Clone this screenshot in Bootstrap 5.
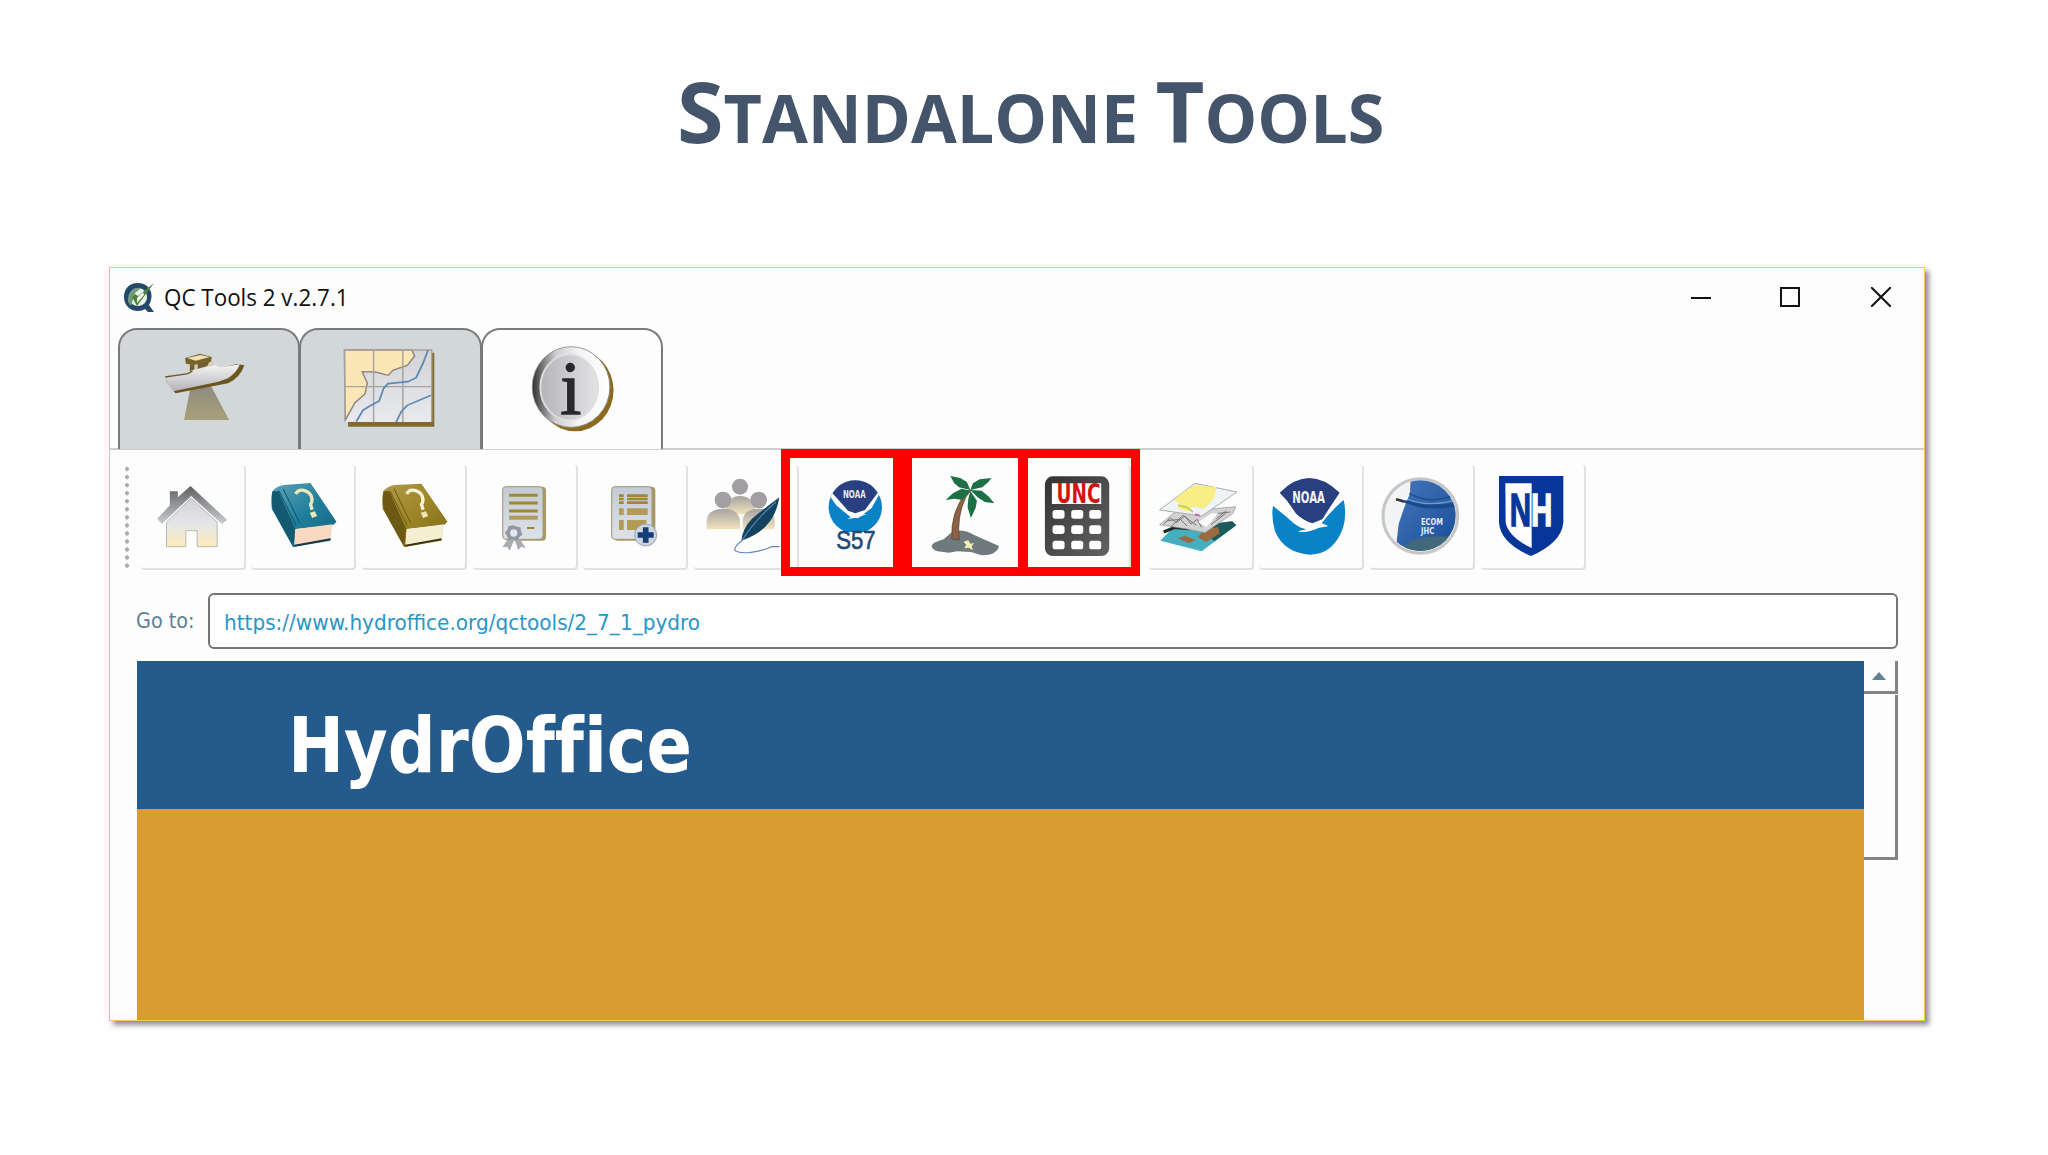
<!DOCTYPE html>
<html lang="en">
<head>
    <meta charset="UTF-8">
    <meta name="viewport" content="width=device-width, initial-scale=1.0">
    <title>Standalone Tools</title>
    <link href="https://cdn.jsdelivr.net/npm/bootstrap@5.3.3/dist/css/bootstrap.min.css" rel="stylesheet">
    <style>
        body {
            background: #fefefe;
            font-family: "Open Sans", "Noto Sans", sans-serif;
            height: 1155px;
            overflow: hidden;
        }
        .slide-title {
            height: 267px;
            padding: 60px 0 0 677px;
            color: #44546a;
            font-weight: 700;
            font-size: 66px;
            line-height: 115px;
            white-space: nowrap;
        }
        .slide-title .cap { font-size: 84px; line-height: 1; }
        .fit { display: inline-block; transform-origin: 0 50%; white-space: nowrap; }
        .fit-title { transform: scaleX(1.006); }
        .fit-caption { transform: scaleX(.933); }
        .fit-label { transform: scaleX(.97); }
        .fit-url { transform: scaleX(1.013); }
        .fit-brand { transform: scaleX(.967); }
        .app-window {
            width: 1816px;
            height: 754px;
            margin-left: 109px;
            background: #fefdfe;
            border: 1.5px solid #f4c64f;
            box-shadow: 4px 4px 5px rgba(80, 85, 90, .65);
        }
        .titlebar { height: 60px; padding: 0 33px 2px 13px; }
        .caption { font-size: 24px; color: #111; margin-left: 9px; line-height: 1; }
        .win-controls { gap: 69px; }
        .win-close { margin-left: 2px; }
        .tab-strip { height: 122px; padding-left: 7.5px; border-bottom: 2px solid #cfcfd1; }
        .app-tab {
            width: 182.5px;
            height: 121px;
            border: 2px solid #777b7e;
            border-bottom: 0;
            border-radius: 19px 19px 0 0;
            background: #d2d7da;
        }
        .app-tab + .app-tab { margin-left: -1px; }
        .app-tab.current { background: #fefdfe; }
        .app-tab svg { width: 100%; height: 100%; display: block; }
        .toolbar { height: 143px; padding: 15px 0 0 15px; }
        .grip {
            width: 4px;
            height: 104px;
            margin-right: 11.5px;
            background: radial-gradient(circle at 50% 50%, #b0abad 1.8px, transparent 2.3px) 0 0 / 4px 8.05px;
        }
        .tools { gap: 5.7px; }
        .tool {
            width: 105px;
            height: 105px;
            border-right: 2px solid #e2e0e1;
            border-bottom: 2px solid #e2e0e1;
            border-radius: 4px;
        }
        .tool svg { width: 104px; height: 104px; display: block; }
        .tool.group-start { margin-left: 12px; }
        .mark-box { position: absolute; top: -1px; height: 127px; border: 9px solid #f00; }
        .mark-1 { left: 671px; width: 121px; }
        .mark-2 { left: 792px; width: 126px; border-left-width: 10px; }
        .mark-3 { left: 908px; width: 122px; }
        .address { height: 56px; padding: 0 26px; font-family: "DejaVu Sans Condensed", "DejaVu Sans", sans-serif; font-size: 22px; }
        .address label { width: 72px; color: #5f7f96; line-height: 1; white-space: nowrap; }
        .url-box {
            height: 56px;
            border: 2px solid #777377;
            border-radius: 6px;
            padding: 2px 0 0 14px;
            color: #2a96c6;
            background: #fefefe;
        }
        .viewer { margin: 12px 26px 0 26.5px; }
        .banner { height: 147.5px; background: #255a8c; padding: 21px 0 0 151px; }
        .brand-name { font-family: "DejaVu Sans", sans-serif; font-stretch: condensed; font-weight: 700; font-size: 77px; color: #fff; line-height: 1; font-variant-ligatures: none; }
        .page-body { background: #d89c32; }
        .scroll { width: 34px; }
        .scroll-up { height: 33px; border-right: 3px solid #858286; border-bottom: 3px solid #858286; }
        .scroll-up svg { margin-right: 2px; }
        .scroll-thumb { height: 165px; margin-top: 1px; border-right: 3px solid #858286; border-bottom: 3px solid #858286; }
    </style>
</head>
<body>
    <h1 class="slide-title m-0"><span class="fit fit-title"><span class="cap">S</span>TANDALONE <span class="cap">T</span>OOLS</span></h1>

    <div class="app-window d-flex flex-column overflow-visible">
        <div class="titlebar d-flex align-items-center flex-shrink-0">
            <svg width="32" height="31" viewBox="0 0 32 31">
                <path d="M15 1C6 1 1 7 1 15s6 14 14 14c3 0 5-1 7-2l3 3h6l-5-7c4-7 3-14-1-18-3-3-6-4-10-4z" fill="#24486a"/>
                <path d="M15 6c5 0 9 4 9 9s-4 9-9 9-9-4-9-9 4-9 9-9z" fill="#e9f1ea"/>
                <path d="M5 20C4 10 11 5 18 6l-6 5-4 13z" fill="#6f9a80"/>
                <path d="M9 15l5 9L31 1 15 14l-3-2z" fill="#4d8038"/>
                <path d="M14 16l6-6 1 3-7 8z" fill="#f4faf2"/>
            </svg>
            <span class="caption fit fit-caption">QC Tools 2 v.2.7.1</span>
            <div class="win-controls d-flex align-items-center ms-auto">
                <svg width="20" height="20" viewBox="0 0 20 20"><path d="M0 11h20" stroke="#111" stroke-width="2"/></svg>
                <svg width="20" height="20" viewBox="0 0 20 20"><path d="M1 1h18v18H1z" fill="none" stroke="#111" stroke-width="2"/></svg>
                <svg class="win-close" width="20" height="20" viewBox="0 0 20 20"><path d="M0 0l20 20M20 0L0 20" stroke="#111" stroke-width="2"/></svg>
            </div>
        </div>

        <div class="tab-strip d-flex flex-shrink-0">
            <div class="app-tab">
                <svg viewBox="54 210 482.5 357" preserveAspectRatio="none">
                    <defs>
                        <linearGradient id="beam" x2="0" y2="1"><stop stop-color="#8d8a80"/><stop offset="1" stop-color="#a9a07a"/></linearGradient>
                        <linearGradient id="hull" x2="0" y2="1"><stop stop-color="#f5f5f6"/><stop offset="1" stop-color="#b4b4b8"/></linearGradient>
                    </defs>
                    <path d="M245 380l52-8 52 108H227z" fill="url(#beam)"/>
                    <path d="M178 362l26 38 142-30q34-18 44-54l-20-4z" fill="#6b551c"/>
                    <path d="M238 308l64-6 10 22-72 18z" fill="#d6ceb6"/>
                    <path d="M243 314l12-4v18l-12 6zM264 310l32-6-6 14-26 8z" fill="#6f5d33"/>
                    <path d="M230 294l40-13 32 10-2 14-48 10-20-4z" fill="#79632b"/>
                    <path d="M235 294l36-9 26 6-38 11z" fill="#efe0b8"/>
                    <path d="M174 350l64-10 10-8 62-16 16 6 52-9q-8 24-32 42l-26 10-122 29q-16-20-24-44z" fill="url(#hull)"/>
                    <path d="M176 351l62-10 12-8" fill="none" stroke="#6a5a34" stroke-width="4"/>
                </svg>
            </div>
            <div class="app-tab">
                <svg viewBox="544.7 210 482.5 357" preserveAspectRatio="none">
                    <defs><linearGradient id="sea" x2="0" y2="1"><stop stop-color="#d3d3d5"/><stop offset="1" stop-color="#e8eaee"/></linearGradient></defs>
                    <path d="M672 278h233v222H672z" fill="#83682b"/>
                    <path d="M662 270h236v216H662z" fill="url(#sea)"/>
                    <path d="M662 270h182l8 18-20 28-38 14-14 16-34-10-36-1 14 34-6 32-28 28-26 52z" fill="#fbe7b6" stroke="#8f8580" stroke-width="4"/>
                    <path d="M741 270v216M820 270v216M662 380h236M662 270h236v216" fill="none" stroke="#aba3a0" stroke-width="4"/>
                    <path d="M888 271l-14 40-18 42-22 12-54 6-12 14-12 38-30 18-14 10-18 34M896 406l-64 30-16 18-14 32" fill="none" stroke="#6189b4" stroke-width="5"/>
                    <path d="M663 270v216" stroke="#aaa" stroke-width="3"/>
                </svg>
            </div>
            <div class="app-tab current">
                <svg viewBox="1035 210 482.5 357" preserveAspectRatio="none">
                    <defs>
                        <linearGradient id="rim"><stop stop-color="#2f2f30"/><stop offset=".3" stop-color="#cfcfd1"/><stop offset=".6" stop-color="#f4f4f5"/><stop offset="1" stop-color="#fff"/></linearGradient>
                        <linearGradient id="face"><stop stop-color="#b5b4b6"/><stop offset="1" stop-color="#e3e2e4"/></linearGradient>
                    </defs>
                    <ellipse cx="1284" cy="391" rx="104" ry="123" fill="#8b6a1d"/>
                    <ellipse cx="1273" cy="381" rx="105" ry="121" fill="url(#rim)" stroke="#8a898b" stroke-width="2.5"/>
                    <ellipse cx="1268" cy="382" rx="78" ry="98" fill="url(#face)" stroke="#dedddf" stroke-width="5"/>
                    <g transform="translate(1272 462) scale(.9 1)"><text text-anchor="middle" font-family="Liberation Serif, serif" font-size="228" fill="#29292b" stroke="#29292b" stroke-width="4">i</text></g>
                </svg>
            </div>
        </div>

        <div class="toolbar position-relative d-flex flex-shrink-0">
            <div class="grip"></div>
            <div class="tools d-flex">
                <div class="tool">
                    <svg viewBox="61.5 45 312 312">
                        <defs>
                            <linearGradient id="roof" x2="0" y2="1"><stop stop-color="#5f5f61"/><stop offset="1" stop-color="#c9ced2"/></linearGradient>
                            <linearGradient id="wall" x2="0" y2="1"><stop stop-color="#d2d2d6"/><stop offset=".55" stop-color="#e6e6e8"/><stop offset="1" stop-color="#fcedb8"/></linearGradient>
                        </defs>
                        <path d="M138 216l74-72 78 72v74h-60v-48h-34v48h-58z" fill="url(#wall)" stroke="#b9b8b8" stroke-width="3"/>
                        <path d="M110 206l38-40v-42h24v18l38-34 110 102-16 12-92-84-88 84z" fill="url(#roof)"/>
                    </svg>
                </div>
                <div class="tool">
                    <svg viewBox="393.6 45 312 312">
                        <defs><linearGradient id="teal" x2="1" y2="1"><stop stop-color="#5fa3b8"/><stop offset=".5" stop-color="#1f7f9c"/><stop offset="1" stop-color="#17627c"/></linearGradient></defs>
                        <path d="M458 124q8-14 34-19l80-6 78 116-10 10-112 12-4 46 108-19v8l-112 19-64-114q-4-32 2-53z" fill="url(#teal)"/>
                        <path d="M458 124q-4 26 0 54l62 112 6-54-50-112z" fill="#155970"/>
                        <path d="M477 122l52 104M490 116l50 104" stroke="#0f5068" stroke-width="3" fill="none"/>
                        <path d="M526 238l112-15-6 43-108 20z" fill="#f9d9c2"/>
                        <path d="M524 290l108-20v-5l-108 19z" fill="#1d3540"/>
                        <path d="M528 132q6-14 24-11 22 6 24 24 2 12-4 18l5 16" fill="none" stroke="#f1e8ba" stroke-width="10"/>
                        <path d="M570 188l15-4 7 14-15 6z" fill="#f1e8ba"/>
                    </svg>
                </div>
                <div class="tool">
                    <svg viewBox="725.7 45 312 312">
                        <defs><linearGradient id="ochre" x2="1" y2="1"><stop stop-color="#b09a4c"/><stop offset=".5" stop-color="#9c8526"/><stop offset="1" stop-color="#7d6a19"/></linearGradient></defs>
                        <path d="M790 124q8-14 34-19l80-4 78 114-10 10-112 12-4 46 108-19v8l-112 19-64-114q-4-32 2-53z" fill="url(#ochre)"/>
                        <path d="M790 124q-4 26 0 54l62 112 6-54-50-112z" fill="#6c5a14"/>
                        <path d="M809 122l52 104M822 116l50 104" stroke="#6a5912" stroke-width="3" fill="none"/>
                        <path d="M860 238l112-15-6 43-108 20z" fill="#f5eed2"/>
                        <path d="M856 290l108-20v-5l-108 19z" fill="#3a3210"/>
                        <path d="M860 132q6-14 24-11 22 6 24 24 2 12-4 18l5 16" fill="none" stroke="#fbf3d6" stroke-width="10"/>
                        <path d="M902 188l15-4 7 14-15 6z" fill="#f3e7b8"/>
                    </svg>
                </div>
                <div class="tool">
                    <svg viewBox="37.8 45 312 312">
                        <defs><linearGradient id="sheet" x2="0" y2="1"><stop stop-color="#c3cbd4"/><stop offset="1" stop-color="#dde2ea"/></linearGradient></defs>
                        <rect x="133" y="110" width="124" height="162" rx="12" fill="#a79a68"/>
                        <rect x="127" y="110" width="121" height="158" rx="10" fill="url(#sheet)" stroke="#a0946a" stroke-width="3"/>
                        <path d="M146 136h86M146 159h86M146 183h86" stroke="#a08638" stroke-width="9"/>
                        <path d="M146 203h86" stroke="#b39b55" stroke-width="12"/>
                        <path d="M200 234h22" stroke="#a08638" stroke-width="6"/>
                        <path d="M146 262l-20 30 14-2 8 12 14-34 12 32 8-10 14 4-24-36z" fill="#a8adb3"/>
                        <path d="M158 226l12 4 10 2 2 12 4 10-10 8-6 10-12-4-14 2-4-12-6-10 8-10 2-10z" fill="#8f98a3"/>
                        <circle cx="160" cy="249" r="11" fill="#e4e8ec"/>
                    </svg>
                </div>
                <div class="tool">
                    <svg viewBox="369.9 45 312 312">
                        <rect x="463" y="110" width="124" height="162" rx="12" fill="#a79a68"/>
                        <rect x="456" y="110" width="121" height="158" rx="10" fill="url(#sheet)" stroke="#a0946a" stroke-width="3"/>
                        <path d="M478 137h14M502 137h62M478 147h14M502 147h62M478 158h14M502 158h62" stroke="#a08638" stroke-width="8"/>
                        <path d="M478 185h14M502 185h62" stroke="#b39b55" stroke-width="20"/>
                        <path d="M478 225h14M502 225h58" stroke="#b39b55" stroke-width="30"/>
                        <circle cx="558" cy="255" r="33" fill="#cfd5de" stroke="#98a3b3" stroke-width="3"/>
                        <path d="M558 232v46M534 255h48" stroke="#123f78" stroke-width="17"/>
                    </svg>
                </div>
                <div class="tool">
                    <svg viewBox="702 45 312 312">
                        <defs><linearGradient id="crew" x2="0" y2="1"><stop stop-color="#a5a2a2"/><stop offset="1" stop-color="#f2e3bd"/></linearGradient></defs>
                        <path d="M796 192q0-52 44-54 46 2 48 54z" fill="url(#crew)"/>
                        <circle cx="840" cy="110" r="24" fill="#a19fa1"/>
                        <path d="M740 238v-24q0-36 50-38 48 2 50 38v24z" fill="url(#crew)"/>
                        <circle cx="789" cy="150" r="25" fill="#a19fa1"/>
                        <path d="M848 238v-24q0-36 48-38 46 2 48 38v24z" fill="url(#crew)"/>
                        <circle cx="896" cy="150" r="25" fill="#a19fa1"/>
                        <path d="M844 272q4-38 32-66 34-28 82-64-8 52-40 86-26 28-74 44z" fill="#15435f"/>
                        <path d="M948 156q-60 50-104 118-20 14-20 26 6 10 44 8 38-4 66-18h24" fill="none" stroke="#5b86b5" stroke-width="3.5"/>
                    </svg>
                </div>
                <div class="tool">
                    <svg viewBox="104.1 75 312 312">
                        <defs><clipPath id="disc"><circle cx="255" cy="201" r="80"/></clipPath></defs>
                        <g clip-path="url(#disc)">
                            <path d="M170 116h170v160H170z" fill="#0a82c8"/>
                            <path d="M170 116h170v24l-36 64-40 30h-20l-46-38-28-40z" fill="#fff"/>
                            <path d="M180 152q74-66 150-4l-46 62-29 10-22-8z" fill="#293f80"/>
                        </g>
                        <path d="M230 238l24-12 36-4-26 10z" fill="#fff"/>
                        <text x="218" y="175" textLength="68" lengthAdjust="spacingAndGlyphs" font-family="DejaVu Sans, sans-serif" font-weight="700" font-size="33" fill="#e7ebf5">NOAA</text>
                        <text x="198" y="326" textLength="118" lengthAdjust="spacingAndGlyphs" font-family="Liberation Sans, sans-serif" font-size="78" fill="#1f4a78" stroke="#1f4a78" stroke-width="2">S57</text>
                    </svg>
                </div>
                <div class="tool">
                    <svg viewBox="436.2 75 312 312">
                        <path d="M486 318q4-12 36-20l28-24q30-8 62 10l76 34q-2 12-12 18-10 10-40 10l-32-10-42-2-24 4-34-4q-16-4-18-16z" fill="#6f7a7c"/>
                        <path d="M547 297q-6-80 46-144l12-4-16 22q-28 58-20 128z" fill="#8a6248" stroke="#5c3d2a" stroke-width="2"/>
                        <path d="M602 150l-10-24-20-12-30-6 12 22 14 12zM602 150l8-20 20-12 36-4-12 14-16 14zM602 152l-26-6-26 14-22 20 26-4 24 4zM602 150l34 2 22 18 16 20-28-4-22-14zM602 152l20 30-4 22-14 30-10-32 2-24z" fill="#1d7044"/>
                        <path d="M596 301l6 10 12-2-8 10 4 12-12-8-14 2 6-10-8-10z" fill="#f2f2b4"/>
                    </svg>
                </div>
                <div class="tool">
                    <svg viewBox="768.3 75 312 312">
                        <defs><linearGradient id="calc" x2="1" y2="1"><stop stop-color="#333"/><stop offset="1" stop-color="#626262"/></linearGradient></defs>
                        <rect x="825" y="109" width="193" height="239" rx="24" fill="url(#calc)"/>
                        <path d="M846 130h148v62H846z" fill="#fdfdfd"/>
                        <text x="860" y="190" textLength="132" lengthAdjust="spacingAndGlyphs" font-family="DejaVu Sans, sans-serif" font-weight="700" font-size="77" fill="#d5130c">UNC</text>
                        <g fill="#fff">
                            <rect x="848" y="210" width="36" height="26" rx="8"/><rect x="904" y="210" width="36" height="26" rx="8"/><rect x="958" y="210" width="36" height="26" rx="8"/>
                            <rect x="848" y="256" width="36" height="26" rx="8"/><rect x="904" y="256" width="36" height="26" rx="8"/><rect x="958" y="256" width="36" height="26" rx="8"/>
                            <rect x="848" y="302" width="36" height="26" rx="8"/><rect x="904" y="302" width="36" height="26" rx="8"/><rect x="958" y="302" width="36" height="26" rx="8"/>
                        </g>
                    </svg>
                </div>
                <div class="tool group-start">
                    <svg viewBox="30 45 312 312">
                        <path d="M64 272l34-34 180-24 14 12-104 78z" fill="#45afbf"/>
                        <path d="M216 222l64-8 12 12-66 48-22-20z" fill="#1d5a5e"/>
                        <path d="M176 262l24-26 38-4 4 18-40 26zM116 264l24-6 30 12-20 10z" fill="#9c6a3f"/>
                        <path d="M74 246l34-14 40 4 30-12" stroke="#1d2b2c" stroke-width="10" fill="none"/>
                        <path d="M62 224l44-36 184-18-8 20-84 58-60-12z" fill="#d2d2d2" stroke="#8e8e8e" stroke-width="2"/>
                        <path d="M74 222l20-18 18 14 26-20 18 24 18-14 14 24M96 230l36-34 40 30M208 214l30-24 36-4M216 224l44-34M84 212l40-4 20 20M232 206l30-24" fill="none" stroke="#777" stroke-width="3"/>
                        <path d="M178 216l40-26 20 0-36 42z" fill="#fafafa"/>
                        <path d="M62 180l106-80 126 26-106 72z" fill="#eef3f6" stroke="#a9abae" stroke-width="3"/>
                        <path d="M122 134l46-30 64 8-6 30-30 34-34-6-20 14-28-12 8-16-16-4z" fill="#f8ee84"/>
                        <path d="M118 166l26 6 18 14" fill="none" stroke="#c5cc55" stroke-width="5"/>
                        <path d="M168 193l14 4" stroke="#d04fc0" stroke-width="5"/>
                    </svg>
                </div>
                <div class="tool">
                    <svg viewBox="356 45 312 312">
                        <path d="M418 128q88-88 180 0l-28 42-24 38-30 12q-26-8-48-28l-28-40z" fill="#293f80"/>
                        <path d="M398 168q34 26 62 52 22 16 38 18l-24 6q24 6 54-12l36-4-20-8q28-38 66-70 10 44-2 84-28 78-98 80-78-4-106-70-12-42-6-76z" fill="#0a82c8"/>
                        <path d="M472 244q28-2 44-16l48 0-30 6q-34 16-62 10z" fill="#fff"/>
                        <text x="456" y="160" textLength="98" lengthAdjust="spacingAndGlyphs" font-family="DejaVu Sans, sans-serif" font-weight="700" font-size="46" fill="#f3f5fa">NOAA</text>
                    </svg>
                </div>
                <div class="tool">
                    <svg viewBox="690 45 312 312">
                        <defs>
                            <clipPath id="globe"><circle cx="841" cy="197" r="106"/></clipPath>
                            <linearGradient id="blue" x2="1" y2="1"><stop stop-color="#4578bd"/><stop offset="1" stop-color="#164a94"/></linearGradient>
                        </defs>
                        <circle cx="841" cy="198" r="112" fill="#f3f4f5" stroke="#c6c6c4" stroke-width="9"/>
                        <g clip-path="url(#globe)">
                            <path d="M812 80h150v230H766l10-88 14-42 20-50z" fill="url(#blue)"/>
                            <path d="M784 150l28 2q54 16 136 8v10q-90 14-134-6l-30-8z" fill="#1c4a8c"/>
                            <path d="M808 130q60 34 126 8" fill="none" stroke="#1b4a8c" stroke-width="4"/>
                            <path d="M804 148q60 24 136 4" fill="none" stroke="#6b9ad2" stroke-width="4"/>
                            <path d="M768 148l22 6" stroke="#333" stroke-width="8"/>
                            <path d="M812 272q50-18 118-12v50H770z" fill="#41687b"/>
                        </g>
                        <text x="843" y="226" textLength="66" lengthAdjust="spacingAndGlyphs" font-family="DejaVu Sans, sans-serif" font-weight="700" font-size="24" fill="#e3ecf8">ECOM</text>
                        <text x="843" y="252" textLength="40" lengthAdjust="spacingAndGlyphs" font-family="DejaVu Sans, sans-serif" font-weight="700" font-size="24" fill="#e3ecf8">JHC</text>
                    </svg>
                </div>
                <div class="tool">
                    <svg viewBox="1023 45 312 312">
                        <path d="M1077 78h193v140q-6 60-97 100-92-40-96-100z" fill="#06369a"/>
                        <path d="M1096 100h79v194q-68-32-78-76z" fill="#fefefe"/>
                        <text x="1109" y="228" textLength="128" lengthAdjust="spacingAndGlyphs" font-family="Liberation Sans, sans-serif" font-weight="700" font-size="140" stroke-width="4"><tspan fill="#06369a" stroke="#06369a">N</tspan><tspan fill="#fefefe" stroke="#fefefe">H</tspan></text>
                    </svg>
                </div>
            </div>
            <div class="mark-box mark-1"></div>
            <div class="mark-box mark-2"></div>
            <div class="mark-box mark-3"></div>
        </div>

        <div class="address d-flex align-items-center flex-shrink-0">
            <label><span class="fit fit-label">Go to:</span></label>
            <div class="url-box d-flex align-items-center flex-grow-1"><span class="fit fit-url">https://www.hydroffice.org/qctools/2_7_1_pydro</span></div>
        </div>

        <div class="viewer d-flex flex-grow-1">
            <div class="d-flex flex-column flex-grow-1">
                <div class="banner d-flex align-items-center"><span class="brand-name fit fit-brand">HydrOffice</span></div>
                <div class="page-body flex-grow-1"></div>
            </div>
            <div class="scroll">
                <div class="scroll-up d-flex justify-content-center pt-2">
                    <svg width="14" height="14" viewBox="0 0 14 14"><path d="M0 11l7-8 7 8z" fill="#5f8297"/></svg>
                </div>
                <div class="scroll-thumb"></div>
            </div>
        </div>
    </div>
    <script src="https://cdn.jsdelivr.net/npm/bootstrap@5.3.3/dist/js/bootstrap.bundle.min.js"></script>
</body>
</html>
